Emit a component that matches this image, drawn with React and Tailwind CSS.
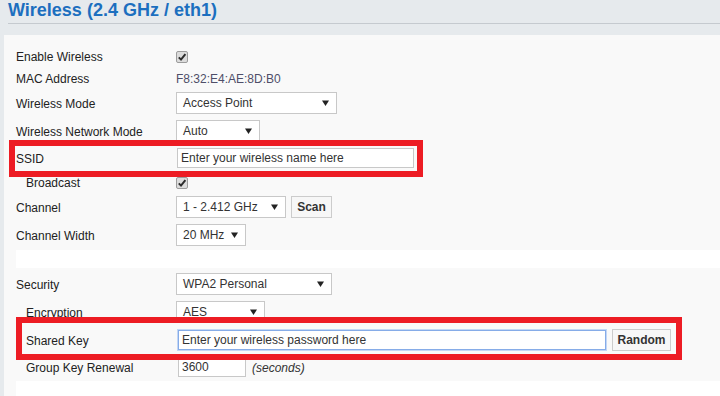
import React from "react";

const Arrow = () => (
  <svg width="7" height="6" viewBox="0 0 7 6" className="shrink-0">
    <path d="M0 0.5h7L3.5 6z" fill="#222" />
  </svg>
);

const Select = ({ value, className }) => (
  <div
    className={`flex h-[22px] items-center justify-between border border-[#c8c8c8] bg-white pl-[6px] pr-[7px] text-[#333] ${className}`}
  >
    <span>{value}</span>
    <Arrow />
  </div>
);

const Checkbox = () => (
  <span className="mt-[2px] flex h-[12px] w-[12px] items-center justify-center rounded-[2px] border border-[#9c9c9c] bg-[#dcdcdc]">
    <svg width="10" height="10" viewBox="0 0 10 10">
      <path d="M1.8 5.4 L4 7.6 L8.4 2.2" stroke="#2b2b2b" strokeWidth="2" fill="none" />
    </svg>
  </span>
);

const Row = ({ label, indent, className, children, mark }) => (
  <div className={`relative flex items-center ${className}`}>
    <div className={`w-[160px] shrink-0 pt-[2px] ${indent ? "pl-[10px]" : ""}`}>{label}</div>
    <div className="flex items-center">{children}</div>
    {mark}
  </div>
);

const Button = ({ children, className }) => (
  <button
    type="button"
    className={`flex h-[22px] items-center justify-center border border-[#cccccc] bg-[#f7f7f7] font-bold text-[#333] ${className}`}
  >
    {children}
  </button>
);

export default function App() {
  return (
    <div className="h-[396px] w-[720px] overflow-hidden bg-[#e6eaed] font-['Liberation_Sans',Arial,sans-serif] text-[12px] text-[#222]">
      {/* header */}
      <div className="ml-2 h-[24px] border-b border-[#c5cacf]">
        <h1 className="text-[18px] font-bold leading-[20px] text-[#1c6fbf]">
          Wireless (2.4 GHz / eth1)
        </h1>
      </div>

      <div className="ml-[4px] mt-[11px] flex h-[361px] flex-col bg-[#f9f9f9] pl-[12px]">
        {/* basic settings */}
        <div className="pb-[1px] pt-[10px]">
          <Row label="Enable Wireless" className="h-[22px]">
            <Checkbox />
          </Row>
          <Row label="MAC Address" className="h-[22px]">
            <span className="pt-[2px] text-[#4e4e68]">F8:32:E4:AE:8D:B0</span>
          </Row>
          <Row label="Wireless Mode" className="h-[28px]">
            <Select value="Access Point" className="w-[161px]" />
          </Row>
          <Row label="Wireless Network Mode" className="h-[28px]">
            <Select value="Auto" className="w-[84px]" />
          </Row>
          <Row
            label="SSID"
            className="h-[25px]"
            mark={
              <div className="pointer-events-none absolute -bottom-[7px] -left-[7px] -top-[5px] z-10 w-[414px] border-[6px] border-[#ed1c24]" />
            }
          >
            <input
              readOnly
              value="Enter your wireless name here"
              className="ml-[1px] h-[20px] w-[237px] border border-[#c8c8c8] bg-white px-[3px] text-[#333] outline-none"
            />
          </Row>
          <Row label="Broadcast" indent className="h-[23px]">
            <Checkbox />
          </Row>
          <Row label="Channel" className="h-[28px]">
            <Select value="1 - 2.412 GHz" className="w-[110px]" />
            <Button className="ml-[5px] w-[41px]">Scan</Button>
          </Row>
          <Row label="Channel Width" className="h-[28px]">
            <Select value="20 MHz" className="w-[70px]" />
          </Row>
        </div>

        <div className="h-[18px] shrink-0 bg-white" />

        {/* security */}
        <div className="pb-[1px] pt-[2px]">
          <Row label="Security" className="h-[28px]">
            <Select value="WPA2 Personal" className="w-[156px]" />
          </Row>
          <Row label="Encryption" indent className="h-[27px]">
            <Select value="AES" className="w-[89px]" />
          </Row>
          <Row
            label="Shared Key"
            indent
            className="h-[29px]"
            mark={
              <div className="pointer-events-none absolute -bottom-[6px] -top-[8px] left-0 z-10 w-[666px] border-[6px] border-[#ed1c24]" />
            }
          >
            <input
              readOnly
              value="Enter your wireless password here"
              className="ml-[2px] h-[20px] w-[428px] border border-[#86ace8] bg-white px-[3px] text-[#333] shadow-[0_0_0_1px_#c3d6f5] outline-none"
            />
            <Button className="ml-[6px] w-[59px]">Random</Button>
          </Row>
          <Row label="Group Key Renewal" indent className="h-[26px]">
            <input
              readOnly
              value="3600"
              className="ml-[2px] h-[20px] w-[68px] border border-[#c8c8c8] bg-white px-[3px] text-[#333] outline-none"
            />
            <span className="ml-[6px] pt-[2px] italic text-[#333]">(seconds)</span>
          </Row>
        </div>

        <div className="flex-1 bg-white" />
      </div>
    </div>
  );
}
